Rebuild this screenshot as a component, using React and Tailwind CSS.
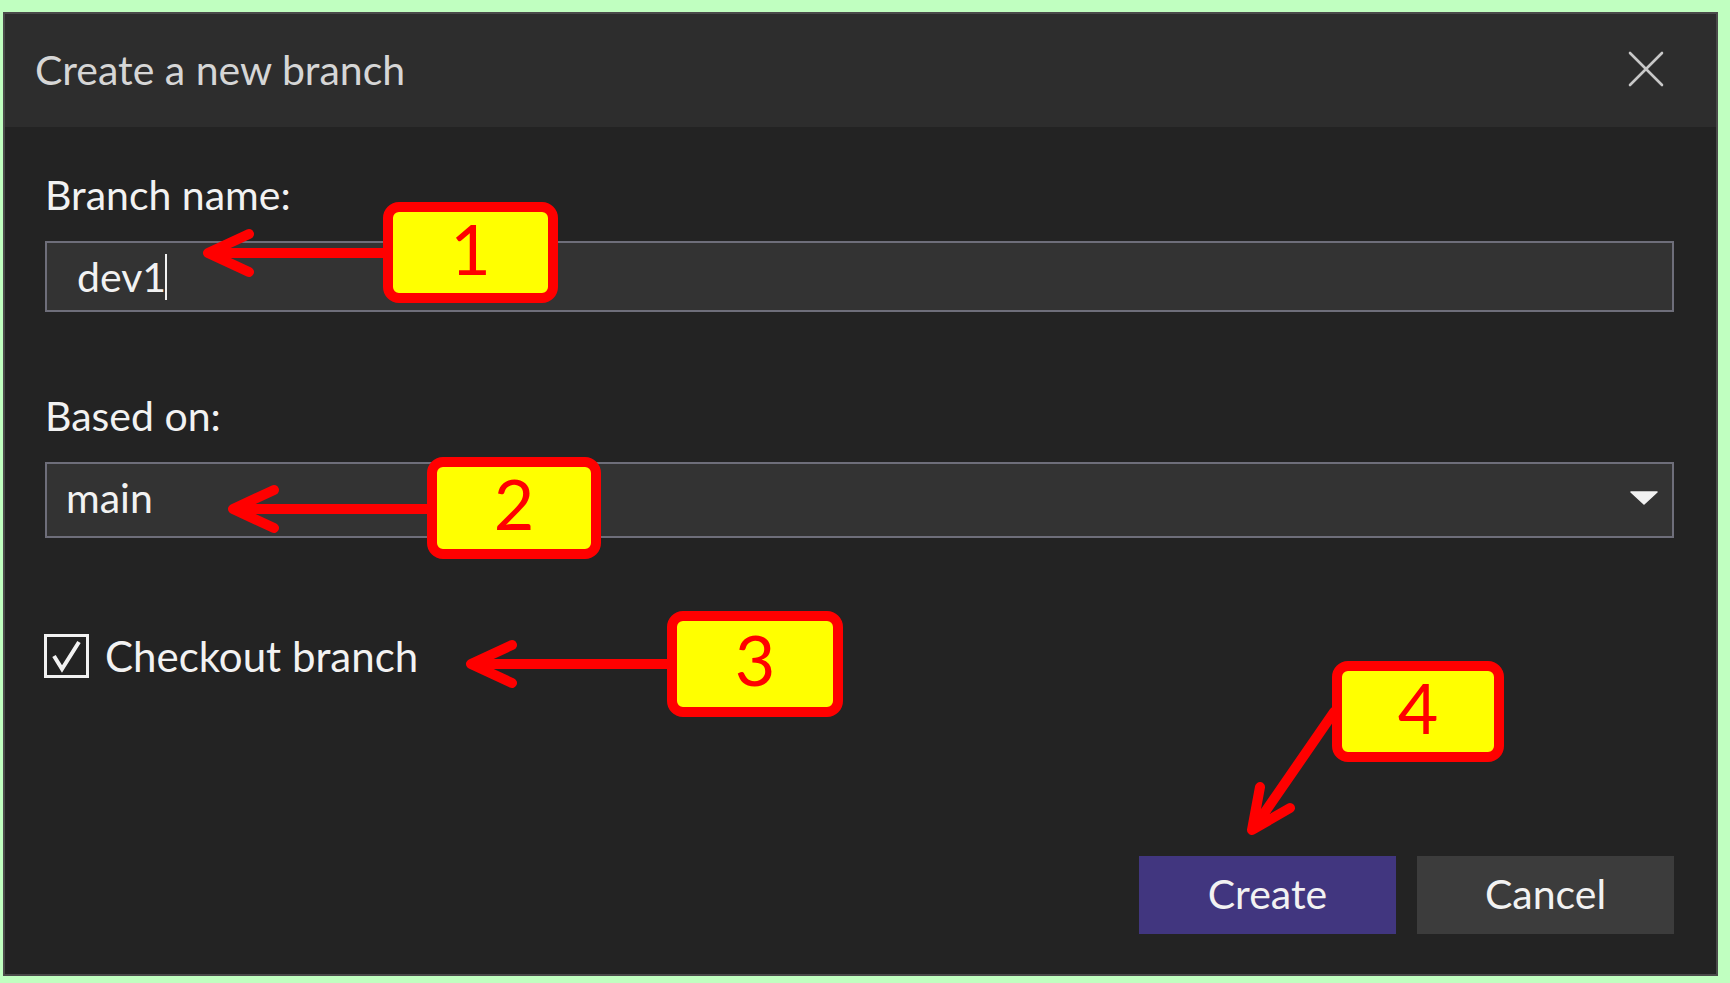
import React from "react";

const FONT = { fontFamily: "Lato, 'Noto Sans', sans-serif" };

function Box({ left, top, w, h, n }) {
  return (
    <div
      className="absolute flex items-center justify-center border-[10px] border-[#ff0000] bg-[#ffff00] rounded-[16px] text-[#ff0000] text-[70px] leading-none pb-[10px]"
      style={{ left, top, width: w, height: h, fontFamily: "Lato, 'Open Sans', sans-serif", fontWeight: 400 }}
    >
      {n}
    </div>
  );
}

export default function App() {
  return (
    <div className="relative w-[1730px] h-[983px] bg-[#c0ffc0] overflow-hidden" style={FONT}>
      <div className="absolute left-[3px] top-[12px] w-[1715px] h-[964px] border-2 border-[#4a4a4a] bg-[#232323] flex flex-col">
        {/* title bar */}
        <div className="h-[113px] bg-[#2d2d2d] flex items-center justify-between pl-[30px] pr-[52px] shrink-0">
          <span className="text-[41px] text-[#d6d6d6] -mt-[2px]">Create a new branch</span>
          <svg width="36" height="36" viewBox="0 0 36 36" className="-mt-[4px]">
            <path d="M2 2 L34 34 M34 2 L2 34" stroke="#c8c8c8" strokeWidth="2.6" strokeLinecap="round" />
          </svg>
        </div>
        {/* body */}
        <div className="flex-1 flex flex-col pl-[40px] pr-[42px] pt-[44px] pb-[40px]">
          <div className="h-[48px] leading-[48px] text-[41px] text-[#f2f2f2]">Branch name:</div>
          <div className="mt-[22px] h-[71px] border-2 border-[#6e6e7a] bg-[#333333] flex items-center pl-[30px]">
            <span className="text-[41px] text-[#f2f2f2] leading-none">dev1</span>
            <span className="w-[2px] h-[46px] bg-[#f2f2f2] -ml-[1px]" />
          </div>
          <div className="mt-[80px] h-[48px] leading-[48px] text-[41px] text-[#f2f2f2]">Based on:</div>
          <div className="mt-[22px] h-[76px] border-2 border-[#6e6e7a] bg-[#333333] flex items-center justify-between pl-[19px] pr-[14px]">
            <span className="text-[41px] text-[#f2f2f2] leading-none -mt-[6px]">main</span>
            <svg width="28" height="14" viewBox="0 0 28 14" className="-mt-[4px]">
              <path d="M1 1 L27 1 L14 13 Z" fill="#f2f2f2" stroke="#f2f2f2" strokeWidth="1.5" strokeLinejoin="round" />
            </svg>
          </div>
          <div className="mt-[94px] h-[48px] flex items-center">
            <div className="w-[45px] h-[44px] border-[3px] border-[#f2f2f2] bg-[#232323] flex items-center justify-center -ml-[1px]">
              <svg width="38" height="38" viewBox="0 0 38 38">
                <polyline points="6,19 14,32 31,5" fill="none" stroke="#f2f2f2" strokeWidth="4" />
              </svg>
            </div>
            <span className="ml-[16px] text-[42px] text-[#f2f2f2] leading-none">Checkout branch</span>
          </div>
          <div className="flex-1" />
          <div className="flex justify-end gap-[21px]">
            <button className="w-[257px] h-[78px] bg-[#41367f] text-[41px] text-[#f2f2f2] flex items-center justify-center pb-[2px]">Create</button>
            <button className="w-[257px] h-[78px] bg-[#3c3c3c] text-[41px] text-[#f2f2f2] flex items-center justify-center pb-[2px]">Cancel</button>
          </div>
        </div>
      </div>

      {/* annotations */}
      <svg className="absolute inset-0 pointer-events-none" width="1730" height="983" viewBox="0 0 1730 983">
        <g stroke="#ff0000" strokeWidth="10" strokeLinecap="round" strokeLinejoin="round" fill="none">
          <path d="M385 253 L210 253 M249 234 L208 253 L249 272" />
          <path d="M429 509 L235 509 M274 490 L233 509 L274 528" />
          <path d="M669 664 L473 664 M512 645 L471 664 L512 683" />
          <path d="M1334 712 L1254 828 M1260 787 L1252 830 L1290 808" />
        </g>
      </svg>
      <Box left={383} top={202} w={175} h={101} n="1" />
      <Box left={427} top={457} w={174} h={102} n="2" />
      <Box left={667} top={611} w={176} h={106} n="3" />
      <Box left={1332} top={661} w={172} h={101} n="4" />
    </div>
  );
}
